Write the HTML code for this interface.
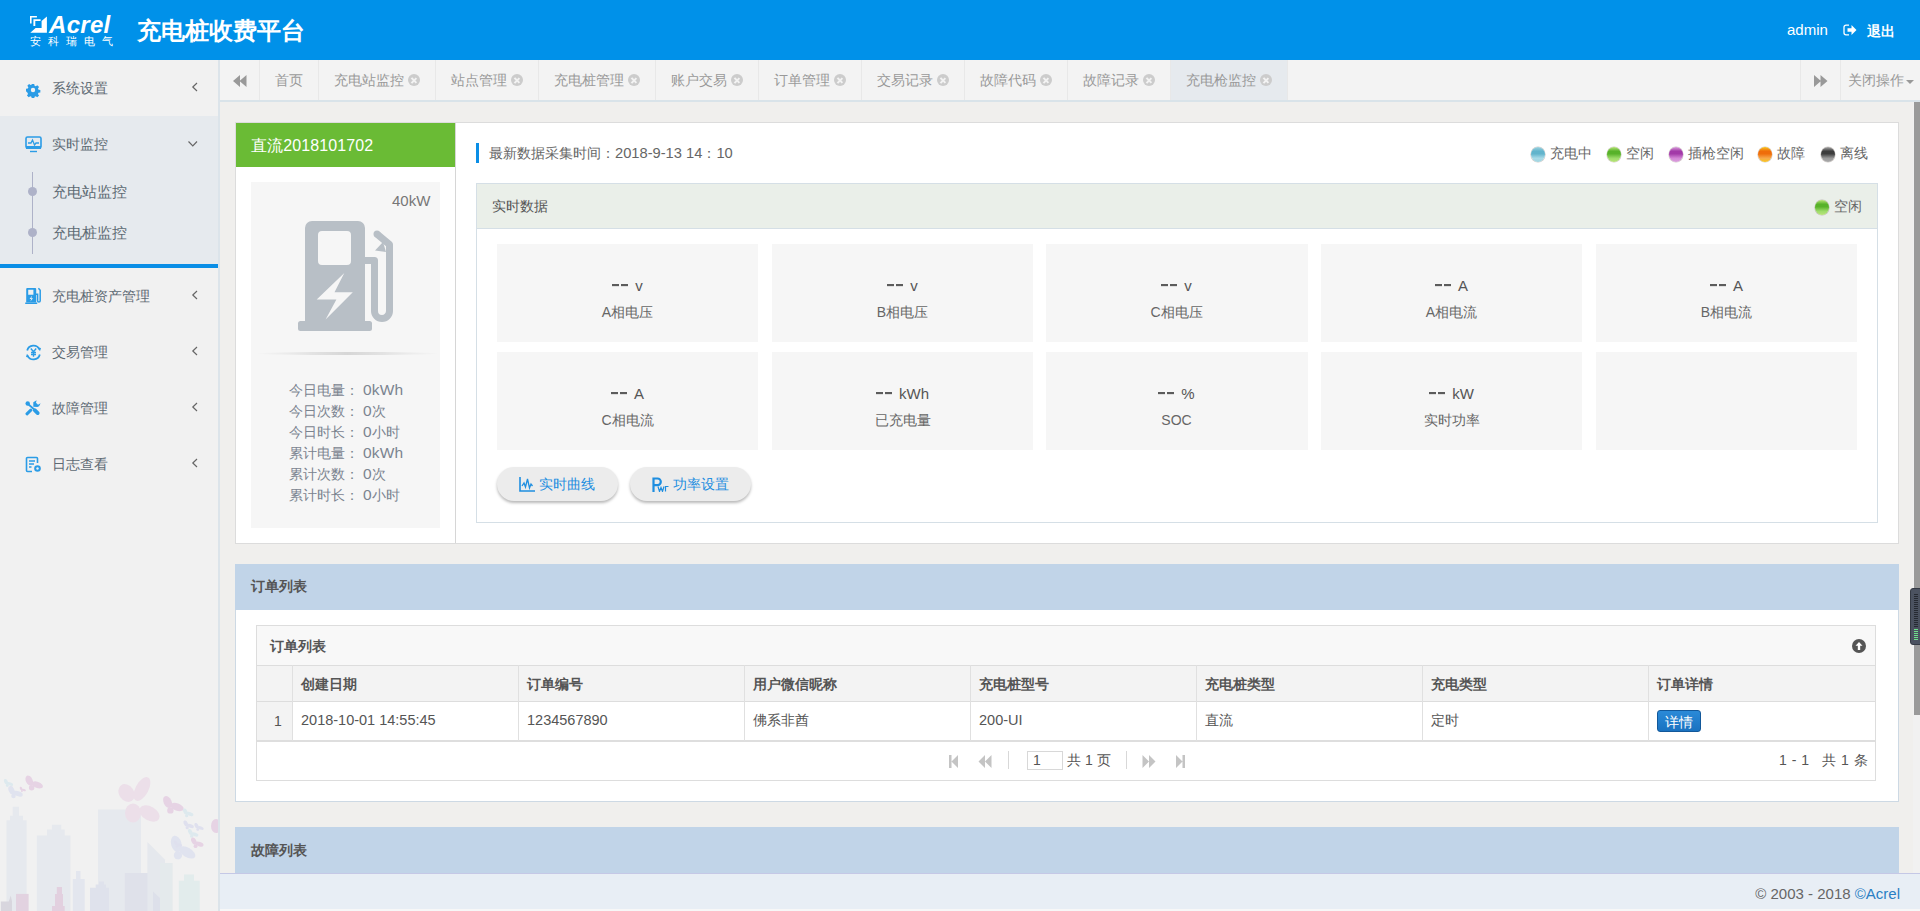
<!DOCTYPE html>
<html><head><meta charset="utf-8">
<style>
*{box-sizing:border-box;margin:0;padding:0}
html,body{width:1920px;height:911px;overflow:hidden;background:#f0efed;font-family:"Liberation Sans",sans-serif;font-size:14px;color:#666}
.a{position:absolute}
#hdr{left:0;top:0;width:1920px;height:60px;background:#0091e9;color:#fff}
#side{left:0;top:60px;width:218px;height:851px;background:#f1f1f1;overflow:hidden}
#sideb{left:218px;top:60px;width:2px;height:851px;background:#dce4ea}
.mi{position:absolute;left:0;width:218px;height:56px;line-height:56px}
.mi .t{position:absolute;left:52px;top:0;font-size:14px;color:#5e6a74}
.mi svg{position:absolute;left:25px}

#tabs{left:220px;top:60px;width:1700px;height:42px;background:#f3f3f3;border-bottom:2px solid #d9e3e9}
.tab{position:absolute;top:0;height:40px;line-height:41px;border-right:1px solid #e8e8e8;font-size:14px;color:#999;padding-left:15px;white-space:nowrap}
.tab i{position:absolute;top:14px;width:12px;height:12px;border-radius:50%;background:#ccc}
.tab i:before,.tab i:after{content:"";position:absolute;left:5.2px;top:2.5px;width:1.7px;height:7px;background:#f3f3f3;transform:rotate(45deg)}
.tab i:after{transform:rotate(-45deg)}
#foot{left:220px;top:873px;width:1700px;height:36px;background:#e8eef5;border-top:1px solid #c5c8e6}
.dot{width:14px;height:15px;border-radius:50%;box-shadow:0 0 0 .6px rgba(120,100,90,.35)}
.tile{width:261px;height:98px;background:#f6f6f6;text-align:center}
.tile .v{position:absolute;left:0;width:261px;top:32px;line-height:20px;font-size:15px;color:#555}
.dd{display:inline-block;width:7px;height:2px;background:#5c5c5c;vertical-align:5px;box-shadow:0 .5px 0 rgba(92,92,92,.3)}
.tile .l{position:absolute;left:0;width:261px;top:58px;line-height:20px;font-size:14px;color:#666}
.btn{height:34px;border-radius:17px;background:#ececec;box-shadow:0 2px 3px rgba(0,0,0,.28);color:#1e8ee0;font-size:14px;line-height:20px}
.th{line-height:20px;font-size:14px;font-weight:bold;color:#555;white-space:nowrap}
.td{line-height:20px;font-size:14px;color:#555;white-space:nowrap}
.n{font-size:15.5px;letter-spacing:.2px;line-height:0}
</style></head><body>
<div id="hdr" class="a">
<svg class="a" style="left:29px;top:15px" width="20" height="19" viewBox="0 0 20 19"><path fill="#fff" d="M1 0.9h6.9v1.6H2.6v5.9H1z M4.4 4.25h7.2V6H6.3v4.9H4.4z M12.6 6L17.9 1.6V17.8H1.3L6.6 13.1h6z"/></svg>
<div class="a" style="left:49px;top:9px;font-size:24px;font-weight:bold;font-style:italic;letter-spacing:.3px;line-height:32px">Acrel</div>
<div class="a" style="left:30px;top:34px;font-size:11px;line-height:14px;letter-spacing:7px;white-space:nowrap">安科瑞电气</div>
<div class="a" style="left:137px;top:15px;font-size:24px;font-weight:bold;line-height:32px;white-space:nowrap">充电桩收费平台</div>
<div class="a" style="left:1787px;top:19px;font-size:15px;line-height:22px">admin</div>
<svg class="a" style="left:1843px;top:24px" width="15" height="12" viewBox="0 0 15 12"><path d="M6 1.2H3a2 2 0 0 0-2 2v5.6a2 2 0 0 0 2 2h3" stroke="#fff" stroke-width="1.3" fill="none"/><path d="M4.5 4.2h4V1l5 5-5 5V7.8h-4z" fill="#fff"/></svg>
<div class="a" style="left:1867px;top:20px;font-size:14px;font-weight:bold;line-height:22px">退出</div>
</div>
<div id="side" class="a">
<svg class="a" style="left:0;top:640px" width="218" height="211" viewBox="0 700 218 211">
<g fill="#e6e9ee">
<path d="M6.5 911V820.3h3.5v-4.6h2.7v-8.9h6.3v8.9h4v4.6h3.6V911z"/>
<path d="M36.8 911V835.5h10.2v-5.9h4.9v-4.9h9.3v4.9h3.5v5.9h5.7V911z"/>
<path d="M98 911V809.5h43V911z"/>
<path d="M72.8 911V879h3.2v-8h4.5v8h4.2V911z" fill="#e3e6ee"/>
<path d="M90 911V887.7h5.7v-3.1h3.3v-3.1h5v3.1h2v3.1h3V911z" fill="#dfe2ec"/>
<path d="M124.8 911V873h24.6V911z" fill="#dfe1ea"/>
<path d="M147.4 911V842l17.6 17.8V911z" fill="#e5e8ed"/>
<path d="M153 911V891.5l9.6 9V911z" fill="#dde0ea"/>
<path d="M160 911V863h12.6V911z" fill="#e4eaec"/>
<path d="M178.8 911V880.7h5.2v-6.2h10v6.2h5.7V911z" fill="#e2ecec"/>
<path d="M0.8 911V901.6h8l2-6 1.2 6V911z" fill="#d8d6de"/>
<path d="M16 911V893.9h12.6V911z" fill="#e2d2e0"/>
<path d="M52 911V906h3v-12.1h1.8v-7h5.2v7h1v12.1h1.7V911z" fill="#e2d0df"/>
</g>
<g><g fill="#ecdfe9"><ellipse cx="126.5" cy="793" rx="7.5" ry="9.5" transform="rotate(-35 126.5 793)"/><ellipse cx="142" cy="789" rx="6.5" ry="13" transform="rotate(28 142 789)"/><ellipse cx="133" cy="813" rx="8" ry="9.5"/><ellipse cx="149.5" cy="813.5" rx="11" ry="7" transform="rotate(30 149.5 813.5)"/></g><g transform="translate(172 806) rotate(0) scale(2.0)" fill="#e6d3e4"><ellipse cx="-2.2" cy="-2" rx="2" ry="3.2" transform="rotate(-25 -2.2 -2)"/><ellipse cx="2.5" cy="0.5" rx="3.5" ry="1.8" transform="rotate(20 2.5 .5)"/><ellipse cx="-0.8" cy="2.2" rx="1.6" ry="1.6"/></g><g transform="translate(187.5 813.5) rotate(0) scale(1.0)" fill="#dde9ee"><ellipse cx="-2.2" cy="-2" rx="2" ry="3.2" transform="rotate(-25 -2.2 -2)"/><ellipse cx="2.5" cy="0.5" rx="3.5" ry="1.8" transform="rotate(20 2.5 .5)"/><ellipse cx="-0.8" cy="2.2" rx="1.6" ry="1.6"/></g><g transform="translate(188 825.5) rotate(0) scale(1.0)" fill="#dfe0ee"><ellipse cx="-2.2" cy="-2" rx="2" ry="3.2" transform="rotate(-25 -2.2 -2)"/><ellipse cx="2.5" cy="0.5" rx="3.5" ry="1.8" transform="rotate(20 2.5 .5)"/><ellipse cx="-0.8" cy="2.2" rx="1.6" ry="1.6"/></g><g transform="translate(198.5 827.5) rotate(0) scale(0.9)" fill="#dfe0ee"><ellipse cx="-2.2" cy="-2" rx="2" ry="3.2" transform="rotate(-25 -2.2 -2)"/><ellipse cx="2.5" cy="0.5" rx="3.5" ry="1.8" transform="rotate(20 2.5 .5)"/><ellipse cx="-0.8" cy="2.2" rx="1.6" ry="1.6"/></g><g transform="translate(192.5 834) rotate(0) scale(1.0)" fill="#dde9ee"><ellipse cx="-2.2" cy="-2" rx="2" ry="3.2" transform="rotate(-25 -2.2 -2)"/><ellipse cx="2.5" cy="0.5" rx="3.5" ry="1.8" transform="rotate(20 2.5 .5)"/><ellipse cx="-0.8" cy="2.2" rx="1.6" ry="1.6"/></g><g transform="translate(196.5 843.5) rotate(0) scale(1.2)" fill="#e6d3e4"><ellipse cx="-2.2" cy="-2" rx="2" ry="3.2" transform="rotate(-25 -2.2 -2)"/><ellipse cx="2.5" cy="0.5" rx="3.5" ry="1.8" transform="rotate(20 2.5 .5)"/><ellipse cx="-0.8" cy="2.2" rx="1.6" ry="1.6"/></g><g transform="translate(181 850) rotate(10) scale(2.6)" fill="#e0e3ef"><ellipse cx="-2.2" cy="-2" rx="2" ry="3.2" transform="rotate(-25 -2.2 -2)"/><ellipse cx="2.5" cy="0.5" rx="3.5" ry="1.8" transform="rotate(20 2.5 .5)"/><ellipse cx="-0.8" cy="2.2" rx="1.6" ry="1.6"/></g><g transform="translate(177.5 844.5) rotate(0) scale(0.8)" fill="#dfe0ee"><ellipse cx="-2.2" cy="-2" rx="2" ry="3.2" transform="rotate(-25 -2.2 -2)"/><ellipse cx="2.5" cy="0.5" rx="3.5" ry="1.8" transform="rotate(20 2.5 .5)"/><ellipse cx="-0.8" cy="2.2" rx="1.6" ry="1.6"/></g><ellipse cx="216" cy="826" rx="5" ry="7" fill="#e6d3e4"/><g transform="translate(8 783.5) rotate(0) scale(0.9)" fill="#dde9ee"><ellipse cx="-2.2" cy="-2" rx="2" ry="3.2" transform="rotate(-25 -2.2 -2)"/><ellipse cx="2.5" cy="0.5" rx="3.5" ry="1.8" transform="rotate(20 2.5 .5)"/><ellipse cx="-0.8" cy="2.2" rx="1.6" ry="1.6"/></g><g transform="translate(14.6 793) rotate(0) scale(1.4)" fill="#e0e3ef"><ellipse cx="-2.2" cy="-2" rx="2" ry="3.2" transform="rotate(-25 -2.2 -2)"/><ellipse cx="2.5" cy="0.5" rx="3.5" ry="1.8" transform="rotate(20 2.5 .5)"/><ellipse cx="-0.8" cy="2.2" rx="1.6" ry="1.6"/></g><g transform="translate(22.4 789.7) rotate(0) scale(0.6)" fill="#e6d3e4"><ellipse cx="-2.2" cy="-2" rx="2" ry="3.2" transform="rotate(-25 -2.2 -2)"/><ellipse cx="2.5" cy="0.5" rx="3.5" ry="1.8" transform="rotate(20 2.5 .5)"/><ellipse cx="-0.8" cy="2.2" rx="1.6" ry="1.6"/></g><g transform="translate(33 784) rotate(0) scale(1.7)" fill="#e6d3e4"><ellipse cx="-2.2" cy="-2" rx="2" ry="3.2" transform="rotate(-25 -2.2 -2)"/><ellipse cx="2.5" cy="0.5" rx="3.5" ry="1.8" transform="rotate(20 2.5 .5)"/><ellipse cx="-0.8" cy="2.2" rx="1.6" ry="1.6"/></g></g>
</svg>
<div class="mi" style="top:0">
<svg style="top:22px" width="16" height="16" viewBox="0 0 16 16"><path fill="#2b9ce6" fill-rule="evenodd" d="M6.6 1h2.8l.4 2.1 1.3.6 1.8-1.2 2 2-1.2 1.8.6 1.3 2.1.4v2.8l-2.1.4-.6 1.3 1.2 1.8-2 2-1.8-1.2-1.3.6-.4 2.1H6.6l-.4-2.1-1.3-.6-1.8 1.2-2-2 1.2-1.8-.6-1.3L0 9.4V6.6l2.1-.4.6-1.3L1.5 3.1l2-2 1.8 1.2 1.3-.6z M8 5.5a2.5 2.5 0 1 0 0 5 2.5 2.5 0 1 0 0-5z" transform="translate(1 1) scale(.875)"/></svg>
<div class="t">系统设置</div><svg style="position:absolute;left:191px;top:22px" width="8" height="10" viewBox="0 0 8 10"><path d="M6 1L1.8 5L6 9" fill="none" stroke="#666" stroke-width="1.2"/></svg></div>
<div class="a" style="left:0;top:56px;width:218px;height:148px;background:#e6eaee"></div>
<div class="mi" style="top:56px">
<svg style="top:20px" width="17" height="17" viewBox="0 0 17 17"><rect x="1" y="1" width="15" height="11" rx="1.5" fill="none" stroke="#2b9ce6" stroke-width="1.6"/><path d="M3 7h3l1.5-3 2 5 1.5-2h3" fill="none" stroke="#2b9ce6" stroke-width="1.3"/><path d="M1 10h15v3H1z" fill="#2b9ce6"/><path d="M5 15.5h7" stroke="#2b9ce6" stroke-width="1.4"/></svg>
<div class="t">实时监控</div><svg style="position:absolute;left:187px;top:24px" width="12" height="8" viewBox="0 0 12 8"><path d="M1.5 1.5L5.8 5.8L10 1.5" fill="none" stroke="#666" stroke-width="1.2"/></svg></div>
<div class="a" style="left:32px;top:112px;width:1px;height:82px;background:#aeb2c8"></div>
<div class="a" style="left:28px;top:127px;width:9px;height:9px;border-radius:50%;background:#aeb2c8"></div>
<div class="a" style="left:28px;top:168px;width:9px;height:9px;border-radius:50%;background:#aeb2c8"></div>
<div class="a" style="left:52px;top:122px;line-height:20px;font-size:15px;color:#5e6a74">充电站监控</div>
<div class="a" style="left:52px;top:163px;line-height:20px;font-size:15px;color:#5e6a74">充电桩监控</div>
<div class="a" style="left:0;top:204px;width:218px;height:4px;background:#0a8ee6"></div>
<div class="mi" style="top:208px">
<svg style="top:19px" width="17" height="17" viewBox="0 0 17 17"><path fill="#2b9ce6" fill-rule="evenodd" d="M2.2 1h8a1 1 0 0 1 1 1v13.5H1.2V2a1 1 0 0 1 1-1z M3.2 2.7v5h5.2v-5z M7 8.8L4.6 12h1.6l-0.8 2.6 2.6-3.4H6.3l.8-2.4z"/><path d="M0.2 15.5h12v1.5H0.2z" fill="#2b9ce6"/><path d="M11 7.2h1.6v6.5a1.3 1.3 0 0 0 2.6 0V3.2L13.4 1.2" fill="none" stroke="#2b9ce6" stroke-width="1.5"/></svg>
<div class="t">充电桩资产管理</div><svg style="position:absolute;left:191px;top:22px" width="8" height="10" viewBox="0 0 8 10"><path d="M6 1L1.8 5L6 9" fill="none" stroke="#666" stroke-width="1.2"/></svg></div>
<div class="mi" style="top:264px">
<svg style="top:20px" width="17" height="17" viewBox="0 0 17 17"><path d="M2.2 6.5A6.5 6.5 0 0 1 14.5 5.5" fill="none" stroke="#2b9ce6" stroke-width="1.8"/><path d="M14.8 10.5A6.5 6.5 0 0 1 2.5 11.5" fill="none" stroke="#2b9ce6" stroke-width="1.8"/><path d="M12.5 3.5l3.5 0.5-1 3.2z M4.5 13.5L1 13l1-3.2z" fill="#2b9ce6"/><path d="M5.8 4.5l2.7 3.2 2.7-3.2M8.5 7.7v5M6 8.5h5M6 10.5h5" fill="none" stroke="#2b9ce6" stroke-width="1.4"/></svg>
<div class="t">交易管理</div><svg style="position:absolute;left:191px;top:22px" width="8" height="10" viewBox="0 0 8 10"><path d="M6 1L1.8 5L6 9" fill="none" stroke="#666" stroke-width="1.2"/></svg></div>
<div class="mi" style="top:320px">
<svg style="top:20px" width="17" height="17" viewBox="0 0 17 17"><g transform="translate(-5 -5)"><circle cx="7.7" cy="8.5" r="2.2" fill="#2b9ce6"/><path d="M8 9l6 5.2" stroke="#2b9ce6" stroke-width="1.8"/><path d="M14.7 15.2l3 2.9" stroke="#2b9ce6" stroke-width="3.8" stroke-linecap="round"/><path d="M10.8 15.2L7 18.8" stroke="#2b9ce6" stroke-width="3" stroke-linecap="round"/><path d="M13.3 11.8V7.3l3.3-2.1-.6 2.6 2 2 2.6-1.5-1.5 3-1.8.8z" fill="#2b9ce6"/></g></svg>
<div class="t">故障管理</div><svg style="position:absolute;left:191px;top:22px" width="8" height="10" viewBox="0 0 8 10"><path d="M6 1L1.8 5L6 9" fill="none" stroke="#666" stroke-width="1.2"/></svg></div>
<div class="mi" style="top:376px">
<svg style="top:20px" width="17" height="17" viewBox="0 0 17 17"><path d="M7 15.5H2.5a1 1 0 0 1-1-1v-12a1 1 0 0 1 1-1h9a1 1 0 0 1 1 1V7" fill="none" stroke="#2b9ce6" stroke-width="1.6"/><path d="M4 5h6M4 8h5M4 11h2.5" stroke="#2b9ce6" stroke-width="1.5"/><circle cx="12.5" cy="12.5" r="3.3" fill="#2b9ce6"/><circle cx="12.5" cy="12.5" r="1.2" fill="#f1f1f1"/></svg>
<div class="t">日志查看</div><svg style="position:absolute;left:191px;top:22px" width="8" height="10" viewBox="0 0 8 10"><path d="M6 1L1.8 5L6 9" fill="none" stroke="#666" stroke-width="1.2"/></svg></div>
</div>
<div id="sideb" class="a"></div>
<div id="tabs" class="a">
<div class="tab" style="left:0;width:40px;padding:0"><svg class="a" style="left:13px;top:15px" width="14" height="12" viewBox="0 0 14 12"><path d="M7 0v12L0 6z M13.5 0v12L6.5 6z" fill="#999"/></svg></div>
<div class="tab" style="left:40px;width:59px">首页</div>
<div class="tab" style="left:99px;width:117px">充电站监控<i style="left:89px"></i></div>
<div class="tab" style="left:216px;width:103px">站点管理<i style="left:75px"></i></div>
<div class="tab" style="left:319px;width:117px">充电桩管理<i style="left:89px"></i></div>
<div class="tab" style="left:436px;width:103px">账户交易<i style="left:75px"></i></div>
<div class="tab" style="left:539px;width:103px">订单管理<i style="left:75px"></i></div>
<div class="tab" style="left:642px;width:103px">交易记录<i style="left:75px"></i></div>
<div class="tab" style="left:745px;width:103px">故障代码<i style="left:75px"></i></div>
<div class="tab" style="left:848px;width:103px">故障记录<i style="left:75px"></i></div>
<div class="tab" style="left:951px;width:117px;background:#e6eaee">充电枪监控<i style="left:89px;background:#ccc"></i></div>
<div class="tab" style="left:1580px;width:41px;padding:0;border-left:1px solid #e8e8e8"><svg class="a" style="left:13px;top:15px" width="14" height="12" viewBox="0 0 14 12"><path d="M0 0v12L7 6z M6.5 0v12L13.5 6z" fill="#999"/></svg></div>
<div class="tab" style="left:1621px;width:79px;padding-left:7px;border:0">关闭操作<span class="a" style="left:65px;top:20px;width:0;height:0;border-left:4px solid transparent;border-right:4px solid transparent;border-top:4px solid #999"></span></div>
</div>
<div id="main" class="a" style="left:235px;top:122px;width:1664px;height:422px;background:#fff;border:1px solid #dcdcdc"></div>
<div class="a" style="left:236px;top:123px;width:219px;height:44px;background:#6abb35;color:#fff;font-size:16px;line-height:46px;padding-left:15px;letter-spacing:.1px">直流2018101702</div>
<div class="a" style="left:455px;top:123px;width:1px;height:420px;background:#d6d6d6"></div>
<div class="a" style="left:251px;top:182px;width:189px;height:346px;background:#f6f6f6"></div>
<div class="a" style="left:392px;top:192px;font-size:15px;line-height:18px;color:#777">40kW</div>
<svg class="a" style="left:290px;top:185px" width="110" height="150" viewBox="0 0 110 150">
<path fill="#b8bfc6" fill-rule="evenodd" d="M22 36h46a7 7 0 0 1 7 7v93H15V43a7 7 0 0 1 7-7z M32 46a4 4 0 0 0-4 4v26a4 4 0 0 0 4 4h25a4 4 0 0 0 4-4V50a4 4 0 0 0-4-4z M54.3 88L26.7 114.6h19.7L35.6 134.4L62.8 107.3H44.5z"/>
<rect x="8" y="136" width="74" height="10" rx="2.5" fill="#b8bfc6"/>
<path d="M74 75.5h10.5V126a7.5 7.5 0 0 0 15 0V59.5L87.5 49.5" fill="none" stroke="#b8bfc6" stroke-width="7" stroke-linejoin="round"/>
<circle cx="87" cy="49" r="3.5" fill="#b8bfc6"/><path d="M93 57L85 65.5L96 67z" fill="#b8bfc6"/>
</svg>
<div class="a" style="left:255px;top:352px;width:185px;height:3px;background:linear-gradient(90deg,rgba(0,0,0,0),rgba(0,0,0,.13) 50%,rgba(0,0,0,0));border-radius:50%"></div>
<div class="a" style="left:289px;top:380px;font-size:14px;line-height:21px;color:#7b8490;white-space:nowrap">
今日电量：&nbsp;<span class="n">0kWh</span><br>今日次数：&nbsp;<span class="n">0</span>次<br>今日时长：&nbsp;<span class="n">0</span>小时<br>累计电量：&nbsp;<span class="n">0kWh</span><br>累计次数：&nbsp;<span class="n">0</span>次<br>累计时长：&nbsp;<span class="n">0</span>小时</div>
<div class="a" style="left:476px;top:143px;width:3px;height:20px;background:#0a8ee6"></div>
<div class="a" style="left:489px;top:143px;line-height:20px;font-size:14px;color:#666;white-space:nowrap">最新数据采集时间：<span style="font-size:14.7px">2018-9-13 14</span>：<span style="font-size:14.7px">10</span></div>
<span class="a dot" style="left:1531px;top:147px;background:linear-gradient(#9fd3df 0,#62b4cc 28%,#62b4cc 45%,#a9dbe8 75%,#9fd3df 100%)"></span><div class="a" style="left:1550px;top:143px;line-height:20px;font-size:14px;color:#666;white-space:nowrap">充电中</div>
<span class="a dot" style="left:1607px;top:147px;background:linear-gradient(#b9e47a 0,#58b22a 28%,#58b22a 45%,#9edc6a 75%,#b9e47a 100%)"></span><div class="a" style="left:1626px;top:143px;line-height:20px;font-size:14px;color:#666;white-space:nowrap">空闲</div>
<span class="a dot" style="left:1669px;top:147px;background:linear-gradient(#d9a0dc 0,#a33aa8 28%,#a33aa8 45%,#d486d6 75%,#d9a0dc 100%)"></span><div class="a" style="left:1688px;top:143px;line-height:20px;font-size:14px;color:#666;white-space:nowrap">插枪空闲</div>
<span class="a dot" style="left:1758px;top:147px;background:linear-gradient(#f8c620 0,#ef6d0a 28%,#ef6d0a 45%,#f7a94a 75%,#f8c620 100%)"></span><div class="a" style="left:1777px;top:143px;line-height:20px;font-size:14px;color:#666;white-space:nowrap">故障</div>
<span class="a dot" style="left:1821px;top:147px;background:linear-gradient(#aaaaaa 0,#3d3d3d 28%,#3d3d3d 45%,#9a9a9a 75%,#aaaaaa 100%)"></span><div class="a" style="left:1840px;top:143px;line-height:20px;font-size:14px;color:#666;white-space:nowrap">离线</div>

<div class="a" style="left:476px;top:183px;width:1402px;height:340px;border:1px solid #d5dfe6;background:#fff"></div>
<div class="a" style="left:477px;top:184px;width:1400px;height:45px;background:#eaefe9;border-bottom:1px solid #d5dfe6"></div>
<div class="a" style="left:492px;top:196px;line-height:20px;font-size:14px;color:#555">实时数据</div>
<span class="a dot" style="left:1815px;top:200px;background:linear-gradient(#b9e47a 0,#58b22a 28%,#58b22a 45%,#9edc6a 75%,#b9e47a 100%)"></span>
<div class="a" style="left:1834px;top:196px;line-height:20px;font-size:14px;color:#666">空闲</div>
<div class="a tile" style="left:497px;top:244px"><div class="v"><span class="dd"></span><span class="dd" style="margin-left:2px"></span><span style="margin-left:7px">v</span></div><div class="l">A相电压</div></div>
<div class="a tile" style="left:772px;top:244px"><div class="v"><span class="dd"></span><span class="dd" style="margin-left:2px"></span><span style="margin-left:7px">v</span></div><div class="l">B相电压</div></div>
<div class="a tile" style="left:1046px;top:244px;width:262px"><div class="v"><span class="dd"></span><span class="dd" style="margin-left:2px"></span><span style="margin-left:7px">v</span></div><div class="l">C相电压</div></div>
<div class="a tile" style="left:1321px;top:244px"><div class="v"><span class="dd"></span><span class="dd" style="margin-left:2px"></span><span style="margin-left:7px">A</span></div><div class="l">A相电流</div></div>
<div class="a tile" style="left:1596px;top:244px"><div class="v"><span class="dd"></span><span class="dd" style="margin-left:2px"></span><span style="margin-left:7px">A</span></div><div class="l">B相电流</div></div>
<div class="a tile" style="left:497px;top:352px"><div class="v"><span class="dd"></span><span class="dd" style="margin-left:2px"></span><span style="margin-left:7px">A</span></div><div class="l">C相电流</div></div>
<div class="a tile" style="left:772px;top:352px"><div class="v"><span class="dd"></span><span class="dd" style="margin-left:2px"></span><span style="margin-left:7px">kWh</span></div><div class="l">已充电量</div></div>
<div class="a tile" style="left:1046px;top:352px;width:262px"><div class="v"><span class="dd"></span><span class="dd" style="margin-left:2px"></span><span style="margin-left:7px">%</span></div><div class="l">SOC</div></div>
<div class="a tile" style="left:1321px;top:352px"><div class="v"><span class="dd"></span><span class="dd" style="margin-left:2px"></span><span style="margin-left:7px">kW</span></div><div class="l">实时功率</div></div>
<div class="a tile" style="left:1596px;top:352px"></div>

<div class="a btn" style="left:497px;top:467px;width:121px"><svg class="a" style="left:22px;top:10px" width="16" height="15" viewBox="0 0 16 15"><path d="M1 0v14h15" fill="none" stroke="#1e8ee0" stroke-width="1.6"/><path d="M3 9l2-3 1.5 4 2-8 2 9 1.5-4 1.5 2" fill="none" stroke="#1e8ee0" stroke-width="1.3"/></svg><span class="a" style="left:42px;top:7px">实时曲线</span></div>
<div class="a btn" style="left:630px;top:467px;width:121px"><svg class="a" style="left:22px;top:10px" width="18" height="15" viewBox="0 0 18 15"><path d="M1.5 15V1.5h4a3.3 3.3 0 0 1 0 6.6h-4" fill="none" stroke="#1e8ee0" stroke-width="2.2"/><path d="M6 9.5l1.5 5 1.5-4 1.5 4 1.5-5 M13.5 14.5v-5h3" fill="none" stroke="#1e8ee0" stroke-width="1.2"/></svg><span class="a" style="left:43px;top:7px">功率设置</span></div>
<div class="a" style="left:235px;top:564px;width:1664px;height:238px;background:#fff;border:1px solid #cdd9e4;border-top:0"></div>
<div class="a" style="left:235px;top:564px;width:1664px;height:46px;background:#c1d4e8;font-weight:bold;font-size:14px;color:#555;line-height:45px;padding-left:16px">订单列表</div>
<div class="a" style="left:256px;top:625px;width:1620px;height:156px;border:1px solid #dddddd;background:#fff"></div>
<div class="a" style="left:257px;top:626px;width:1618px;height:40px;background:#f8f8f8;border-bottom:1px solid #dddddd"></div>
<div class="a" style="left:270px;top:636px;line-height:20px;font-size:14px;font-weight:bold;color:#555">订单列表</div>
<svg class="a" style="left:1852px;top:639px" width="14" height="14" viewBox="0 0 14 14"><circle cx="7" cy="7" r="7" fill="#555"/><path d="M7 3L3.5 6.8h2.3V11h2.4V6.8h2.3z" fill="#fff"/></svg>
<div class="a" style="left:257px;top:666px;width:1618px;height:36px;background:#f3f3f3;border-bottom:1px solid #dddddd"></div>
<div class="a" style="left:257px;top:702px;width:35px;height:39px;background:#f3f3f3"></div>
<div class="a" style="left:257px;top:740px;width:1618px;height:2px;background:#dedede"></div>
<div class="a" style="left:292px;top:665px;width:1px;height:76px;background:#e0e0e0"></div><div class="a th" style="left:301px;top:674px">创建日期</div><div class="a td" style="left:301px;top:710px"><span style="font-size:14.5px">2018-10-01 14:55:45</span></div>
<div class="a" style="left:518px;top:665px;width:1px;height:76px;background:#e0e0e0"></div><div class="a th" style="left:527px;top:674px">订单编号</div><div class="a td" style="left:527px;top:710px"><span style="font-size:14.5px">1234567890</span></div>
<div class="a" style="left:744px;top:665px;width:1px;height:76px;background:#e0e0e0"></div><div class="a th" style="left:753px;top:674px">用户微信昵称</div><div class="a td" style="left:753px;top:710px">佛系非酋</div>
<div class="a" style="left:970px;top:665px;width:1px;height:76px;background:#e0e0e0"></div><div class="a th" style="left:979px;top:674px">充电桩型号</div><div class="a td" style="left:979px;top:710px"><span style="font-size:14.5px">200-UI</span></div>
<div class="a" style="left:1196px;top:665px;width:1px;height:76px;background:#e0e0e0"></div><div class="a th" style="left:1205px;top:674px">充电桩类型</div><div class="a td" style="left:1205px;top:710px">直流</div>
<div class="a" style="left:1422px;top:665px;width:1px;height:76px;background:#e0e0e0"></div><div class="a th" style="left:1431px;top:674px">充电类型</div><div class="a td" style="left:1431px;top:710px">定时</div>
<div class="a" style="left:1648px;top:665px;width:1px;height:76px;background:#e0e0e0"></div><div class="a th" style="left:1657px;top:674px">订单详情</div>

<div class="a td" style="left:274px;top:711px">1</div>
<div class="a" style="left:1657px;top:710px;width:44px;height:22px;background:linear-gradient(#2a8ad8,#1a72c0);border:1px solid #12589a;border-radius:3px;color:#fff;font-size:14px;line-height:22px;text-align:center">详情</div>
<svg class="a" style="left:948px;top:754px" width="240" height="16" viewBox="0 0 240 16">
<path d="M1 1h2.5v13H1z M3.5 7.5L10 1v13z" fill="#c4c4c4"/>
<path d="M37 1v13l-6.5-6.5z M43.5 1v13L37 7.5z" fill="#c4c4c4"/>
<path d="M194.5 1v13l6.5-6.5z M201 1v13l6.5-6.5z" fill="#c4c4c4"/>
<path d="M228 1v13l6.5-6.5z M234.5 1h2.5v13h-2.5z" fill="#c4c4c4"/>
</svg>
<div class="a" style="left:1008px;top:751px;width:1px;height:18px;background:#d8d8d8"></div>
<div class="a" style="left:1126px;top:751px;width:1px;height:18px;background:#d8d8d8"></div>
<div class="a" style="left:1027px;top:751px;width:36px;height:19px;border:1px solid #d8d8d8;background:#fff;font-size:14px;line-height:17px;padding-left:5px;color:#555">1</div>
<div class="a" style="left:1067px;top:750px;line-height:20px;font-size:14px;color:#555;white-space:nowrap">共 1 页</div>
<div class="a" style="left:1779px;top:750px;line-height:20px;font-size:14px;color:#555;white-space:nowrap;word-spacing:1px">1 - 1</div><div class="a" style="left:1822px;top:750px;line-height:20px;font-size:14px;color:#555;white-space:nowrap;word-spacing:1px">共 1 条</div>
<div class="a" style="left:235px;top:827px;width:1664px;height:46px;background:#c1d4e8;font-weight:bold;font-size:14px;color:#555;line-height:46px;padding-left:16px">故障列表</div>
<div class="a" style="left:220px;top:909px;width:1700px;height:2px;background:#f7f7f7"></div><div id="foot" class="a"><div class="a" style="right:20px;top:10px;line-height:20px;font-size:15px;color:#666;white-space:nowrap">© 2003 - 2018 <span style="color:#2a7fc4">©Acrel</span></div></div>
<div class="a" style="left:1913px;top:102px;width:7px;height:771px;background:#f1f1f1"></div>
<div class="a" style="left:1914px;top:102px;width:6px;height:613px;background:#9a9a9a"></div>
<div class="a" style="left:1910px;top:588px;width:12px;height:57px;background:#4b5260;border-radius:3px 0 0 3px;border:1px solid #353a44"></div>
<div class="a" style="left:1914px;top:594px;width:4px;height:34px;background:repeating-linear-gradient(#262a32 0,#262a32 1px,#4b5260 1px,#4b5260 2px)"></div>
<div class="a" style="left:1914px;top:629px;width:4px;height:11px;background:repeating-linear-gradient(#6ee08a 0,#6ee08a 1px,#4b5260 1px,#4b5260 2px)"></div>
</body></html>
